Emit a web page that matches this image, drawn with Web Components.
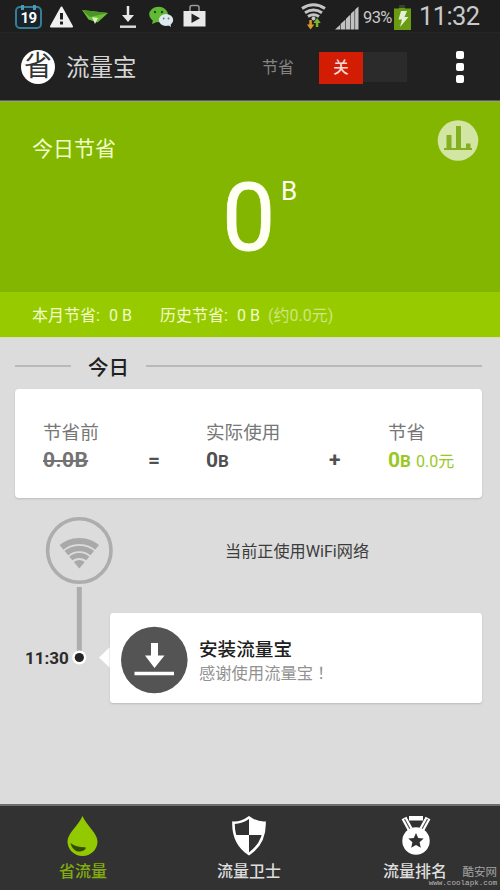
<!DOCTYPE html>
<html lang="zh-CN">
<head>
<meta charset="utf-8">
<title>流量宝</title>
<style>
html,body{margin:0;padding:0}
body{width:500px;height:890px;overflow:hidden;background:#dcdcdc;font-family:Roboto,"Noto Sans CJK SC",sans-serif;line-height:20px;color:#222}
</style>
</head>
<body>
<traffic-app></traffic-app>
<script>
function define(name, html) {
  const t = document.createElement('template');
  t.innerHTML = '<style>*{box-sizing:border-box}svg{display:block;flex:none}:host{white-space:nowrap}</style>' + html;
  customElements.define(name, class extends HTMLElement {
    constructor() {
      super();
      this.attachShadow({mode: 'open'}).appendChild(t.content.cloneNode(true));
    }
  });
}

define('status-bar', `
<style>
:host{display:flex;height:33px;background:#1e1e1e;border-bottom:1px solid #262626;align-items:flex-start;color:#c9c9c9}
.cal{width:27px;height:23px;margin:6px 0 0 15px;border:2px solid #387d96;border-radius:5px;display:flex;align-items:center;justify-content:center;font-size:15px;font-weight:700;color:#fff;background:#17232a;line-height:20px;letter-spacing:-.6px;position:relative}
.cal::before,.cal::after{content:"";position:absolute;top:-3px;width:3px;height:5px;background:#4d9ab5;left:4px}
.cal::after{left:auto;right:4px}
.left{display:block;margin-left:6px}
.sp{flex:1}
.pct{font-size:16.5px;line-height:20px;margin:8px 0 0 2px;width:30px;letter-spacing:-.6px}
.time{font-size:25.5px;line-height:30px;margin:1px 0 0 7px;width:81px;letter-spacing:-.6px}
</style>
<div class="cal">19</div>
<svg class="left" width="160" height="32" viewBox="48 0 160 32">
  <path d="M61.500 7.500L72 26.500H51z" fill="#f0f0f0" stroke="#f0f0f0" stroke-width="2" stroke-linejoin="round"/>
  <path d="M61.500 13v6.500M61.500 21.500v3" stroke="#1e1e1e" stroke-width="3"/>
  <path d="M82 10l26 3-10.500 9.500-9-3z" fill="#6cbf35"/><path d="M82 10l26 3-18 4z" fill="#4b9426"/><path d="M92 17l6 1-3 6z" fill="#d9f2c6"/>
  <path d="M128 6v12" stroke="#e8e8e8" stroke-width="2.500"/><path d="M122 15h12l-6 7z" fill="#e8e8e8"/><path d="M120 26.700h16" stroke="#d8d8d8" stroke-width="2.500"/>
  <ellipse cx="158.500" cy="14.500" rx="9.300" ry="7.800" fill="#62b735"/><path d="M153 20l-1 4 5-2z" fill="#62b735"/><circle cx="155" cy="12" r="1.200" fill="#254818"/><circle cx="162" cy="12" r="1.200" fill="#254818"/>
  <ellipse cx="166" cy="20" rx="7.200" ry="6" fill="#dceaf0"/><path d="M168 25l3 2-.5-3z" fill="#dceaf0"/><circle cx="163.700" cy="18.500" r=".9" fill="#66757a"/><circle cx="168.500" cy="18.500" r=".9" fill="#66757a"/>
  <path d="M183.500 11h22v15.500h-22z" fill="#e9e9e9"/><path d="M190 11V7.500q0-2 2-2h5q2 0 2 2V11" fill="none" stroke="#9a9a9a" stroke-width="1.500"/><path d="M191.500 13.500l8.500 4.800-8.500 4.800z" fill="#252525"/>
</svg>
<div class="sp"></div>
<svg width="60" height="32" viewBox="300 0 60 32">
  <g fill="none" stroke="#c4c4c4" stroke-width="3"><path d="M301 8.500q11.500-7.500 23 0"/><path d="M304 12.700q8.500-5.500 17 0"/><path d="M307 16.500q5.500-3.500 11 0"/></g><circle cx="312.500" cy="18.500" r="2" fill="#c4c4c4"/>
  <path d="M308.300 20h2.500v4.500h2.500l-3.700 5-3.700-5h2.400z" fill="#d99a2b"/><path d="M314.800 27h2.500v-4h2.500l-3.700-5-3.700 5h2.400z" fill="#79b52c"/>
  <path d="M334 29.500l5-4.500v4.500zM339.600 24l4.800-4.500v10h-4.800zM345 18.700l4.400-4.200v15h-4.400zM350 13.500l3.500-3.300v19.300h-3.500zM354.100 9.500L357.500 6.500v23h-3.400z" fill="#c2c2c2"/>
</svg>
<div class="pct">93%</div>
<svg width="19" height="32" viewBox="394 0 19 32"><path d="M400 5h6v3.500h6v21.500h-17V8.500h5z" fill="#6a9c12"/><path d="M400 5h6v3h-6z" fill="#3a3f2f"/><path d="M402 11h6l-2.500 6h4L401 27l2-7.500h-3.500z" fill="#e6efd6"/></svg>
<div class="time">11:32</div>`);

define('toggle-switch', `
<style>:host{display:grid;grid-template-columns:1fr 1fr;width:88px;height:30px;background:#2b2b2b}
.on{background:#d21c03;color:#f6dcd7;font-size:15.500px;line-height:32px;text-align:center;font-weight:500}</style>
<div class="on"><slot></slot></div><div></div>`);

define('app-header', `
<style>
:host{display:flex;height:67px;background:#212121;align-items:center}
.logo{width:34px;height:34px;margin-left:21px;border-radius:50%;background:#fff;color:#333;font-size:28px;line-height:34px;display:flex;justify-content:center}
.title{margin:2px 0 0 11px;font-size:23.500px;line-height:30px;color:#d6d6d6}
.label{margin:2px 25px 0 auto;font-size:16px;color:#848484}
.dots{display:grid;gap:4px;margin:1px 36px 0 49px}
.dots i{width:8px;height:8px;border-radius:2px;background:#fff}
</style>
<div class="logo">省</div><div class="title">流量宝</div><div class="label">节省</div>
<toggle-switch>关</toggle-switch><div class="dots"><i></i><i></i><i></i></div>`);

define('savings-hero', `
<style>
:host{display:block;border-top:1px solid #5c5c58}
.main{height:191px;background:#83b600;border-top:1px solid #94a865;display:grid;grid-template-columns:227px 1fr 43px}
.t{margin:36px 0 0 32px;font-size:21px;line-height:22px;color:#f0ffc8}
.num{display:flex;margin-top:62px;margin-left:-5px;color:#fffff4;align-items:flex-start}
.num b{font-weight:400;font-size:95px;line-height:108px;width:54px;-webkit-text-stroke:.8px #fffff4}
.num span{font-size:26px;line-height:30px;margin:12px 0 0 5px}
svg{margin:18px 0 0 -20px}
.bar{height:46px;background:#97cb00;border-bottom:1px solid #d7dfb8;display:flex;padding:14px 0 0 32px;font-size:16px;line-height:20px;color:#f1fbc9}
.k{width:77px}.v{width:51px}.v2{width:31px}.n{color:#cde67f}
</style>
<div class="main"><div class="t">今日节省</div><div class="num"><b>0</b><span>B</span></div>
<svg width="42" height="42" viewBox="0 0 42 42"><circle cx="21" cy="20.500" r="20.300" fill="#d2e5a2"/><path d="M9.500 15h5v13.500h-5zM19 6h5v22.500h-5zM29 23.500h4.500v5H29zM7 28h28v2H7z" fill="#83b020"/></svg></div>
<div class="bar"><div class="k">本月节省:</div><div class="v">0 B</div><div class="k">历史节省:</div><div class="v2">0 B</div><div class="n">(约0.0元)</div></div>`);

define('day-divider', `
<style>:host{display:flex;align-items:center;height:28px;padding:0 18px 0 15px;font-size:20.500px;font-weight:500;color:#202020}
i{height:2px;background:#b9b9b9;width:56px}i+div{margin:3px 17px 0}div+i{flex:1}</style>
<i></i><div><slot></slot></div><i></i>`);

define('usage-card', `
<style>
:host{display:grid;grid-template-columns:105px 58px 123px 59px 1fr;width:467px;height:109px;margin:9px 0 0 15px;padding:33px 0 0 28px;background:#fff;border-radius:4px;box-shadow:0 1px 2px #bbb;align-content:start}
.h{font-size:18.600px;line-height:22px;color:#777}
.r{font-size:21px;line-height:24px;font-weight:700;margin-top:4px;color:#505050}
.s{text-decoration:line-through;text-decoration-thickness:2px;color:#737373;letter-spacing:.4px}
small{font-size:17px}.g{color:#98c922}.g span{font-size:16px;font-weight:400;margin-left:5px}
</style>
<div class="h">节省前</div><div></div><div class="h">实际使用</div><div></div><div class="h">节省</div>
<div class="r"><span class="s">0.0B</span></div><div class="r">=</div><div class="r">0<small>B</small></div><div class="r">+</div><div class="r g">0<small>B</small><span>0.0元</span></div>`);

define('network-row', `
<style>:host{display:flex;height:69px;margin-top:18px;padding-left:45px}
div{margin:26px 0 0 112px;font-size:16.150px;color:#3c3c3c}</style>
<svg width="68" height="69" viewBox="0 0 68 69"><circle cx="34.300" cy="34.500" r="31.700" fill="none" stroke="#adadad" stroke-width="3.600"/>
<clipPath id="w"><path d="M34.300 52.500L12 26V10h44.600v16z"/></clipPath>
<g fill="none" stroke="#a9a9a9" clip-path="url(#w)"><circle cx="34.300" cy="53" r="28" stroke-width="6"/><circle cx="34.300" cy="53" r="20.500" stroke-width="5.500"/><circle cx="34.300" cy="53" r="13.500" stroke-width="5"/><circle cx="34.300" cy="53" r="4.500" stroke-width="9"/></g></svg>
<div><slot></slot></div>`);

define('timeline-event', `
<style>
:host{display:flex;height:120px;align-items:flex-start}
.time{margin:63px 0 0 25px;width:47px;font-size:17px;font-weight:700;line-height:20px;color:#2b2b2b}
.card{width:372px;height:90px;margin-top:28px;background:#fff;border-radius:3px;box-shadow:0 1px 2px #bbb;display:flex;padding:13px 0 0 10px}
.tx{margin:13px 0 0 11px}.a{font-size:18.600px;line-height:23px;font-weight:500;color:#202020}.b{font-size:16.300px;line-height:22px;height:22px;color:#929292;margin-top:1px}
.b span{font-family:"Noto Sans CJK TC",sans-serif;line-height:1}
</style>
<div class="time">11:30</div>
<svg width="38" height="92" viewBox="72 0 38 92"><path d="M79.300 2v64" stroke="#adadad" stroke-width="5"/><circle cx="79.300" cy="72.500" r="7" fill="#fff"/><circle cx="79.300" cy="72.500" r="4.600" fill="#252525"/><path d="M110 62v21l-11-10.500z" fill="#fff"/></svg>
<div class="card"><svg width="68" height="68" viewBox="0 0 68 68"><circle cx="34.300" cy="34" r="33.300" fill="#545454"/><path d="M31 17h7v12.500h6.500L34.500 42 25 29.500h6zM14.500 45.700h39.500v3.600H14.500z" fill="#fff"/></svg>
<div class="tx"><div class="a">安装流量宝</div><div class="b">感谢使用流量宝<span lang="zh-TW">！</span></div></div></div>`);

define('tab-item', `
<style>:host{display:flex;flex-direction:column;align-items:center;font-size:16px;color:#dedede}
.l{margin-top:5px;line-height:20px;font-weight:500}</style>
<slot name="icon"></slot><div class="l"><slot></slot></div>`);

define('tab-bar', `
<style>:host{display:grid;grid-template-columns:166px 166px 166px;height:86px;padding-top:10px;background:#323232;border-top:2px solid #6d6d6d;position:relative}
tab-item:first-of-type{color:#82ad0c}
.wm{position:absolute;right:3px;bottom:2px;text-align:right;color:#a5a5a5;font-size:11.500px;line-height:14px}
.wm div+div{font:7.600px/9px "Liberation Mono",monospace;color:#b8b8b8;margin-top:0}</style>
<tab-item><svg slot="icon" width="40" height="41" viewBox="0 0 40 41"><path d="M19.500 0C16 9 4.500 17 4.500 25.500a15 14.500 0 0 0 30 0C34.500 17 23 9 19.500 0z" fill="#92c900"/><path d="M7.500 27c4 3.500 9 4.300 15 4.200q1 3-5 4.300c-5 .8-9-3.500-10-8.500z" fill="#354b05"/></svg>省流量</tab-item>
<tab-item><svg slot="icon" width="40" height="41" viewBox="0 0 40 41"><path d="M20 1.500q7.500 5.500 15.500 5.200Q36 27 20 38 4 27 4.500 6.700 12.500 7 20 1.500z" fill="#323232" stroke="#fff" stroke-width="2.600"/><path d="M20 2q7 5 15 5l-1.500 12H20zM20 19v18Q8 29 6 19z" fill="#fff"/></svg>流量卫士</tab-item>
<tab-item><svg slot="icon" width="40" height="41" viewBox="0 0 40 41"><path d="M9 2l6.500 12M33 2l-6.500 12" stroke="#fff" stroke-width="5.500"/><path d="M9.500 3l6 11M32.500 3l-6 11" stroke="#555" stroke-width="1.200"/><path d="M14 0h14v4.500H14z" fill="#fff"/><circle cx="21" cy="25" r="13.700" fill="#fff"/><path d="M21 17l2.200 5.100 5.500.5-4.100 3.700 1.200 5.400-4.800-2.800-4.800 2.800 1.200-5.400-4.100-3.700 5.500-.5z" fill="#303030"/></svg>流量排名</tab-item>
<div class="wm"><div>酷安网</div><div>www.coolapk.com</div></div>`);

define('traffic-app', `
<style>:host{display:flex;flex-direction:column;height:890px;background:#dcdcdc}day-divider{margin-top:14px}tab-bar{margin-top:auto}</style>
<status-bar></status-bar><app-header></app-header><savings-hero></savings-hero>
<day-divider>今日</day-divider><usage-card></usage-card>
<network-row>当前正使用WiFi网络</network-row><timeline-event></timeline-event><tab-bar></tab-bar>`);
</script>
</body>
</html>
